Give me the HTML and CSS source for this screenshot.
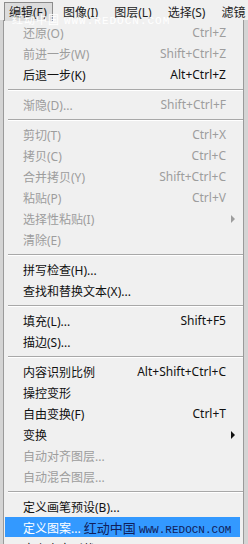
FILE: index.html
```html
<!DOCTYPE html>
<html lang="zh-CN">
  <head>
    <meta charset="UTF-8" />
    <title>编辑菜单</title>
    <link rel="stylesheet" href="styles.css">
  </head>
  <body>
    <div class="menubar">
      <span class="top active">编辑(E)</span>
      <span class="top">图像(I)</span>
      <span class="top">图层(L)</span>
      <span class="top">选择(S)</span>
      <span class="top">滤镜</span>
    </div>

    <div class="menu">
      <div class="row off"><span>还原(O)</span><span class="key">Ctrl+Z</span><i></i></div>
      <div class="row off"><span>前进一步(W)</span><span class="key">Shift+Ctrl+Z</span><i></i></div>
      <div class="row"><span>后退一步(K)</span><span class="key">Alt+Ctrl+Z</span><i></i></div>
      <div class="sep"></div>
      <div class="row off"><span>渐隐(D)...</span><span class="key">Shift+Ctrl+F</span><i></i></div>
      <div class="sep"></div>
      <div class="row off"><span>剪切(T)</span><span class="key">Ctrl+X</span><i></i></div>
      <div class="row off"><span>拷贝(C)</span><span class="key">Ctrl+C</span><i></i></div>
      <div class="row off"><span>合并拷贝(Y)</span><span class="key">Shift+Ctrl+C</span><i></i></div>
      <div class="row off"><span>粘贴(P)</span><span class="key">Ctrl+V</span><i></i></div>
      <div class="row off"><span>选择性粘贴(I)</span><span class="key"></span><i class="arrow"></i></div>
      <div class="row off"><span>清除(E)</span><span class="key"></span><i></i></div>
      <div class="sep"></div>
      <div class="row"><span>拼写检查(H)...</span><span class="key"></span><i></i></div>
      <div class="row"><span>查找和替换文本(X)...</span><span class="key"></span><i></i></div>
      <div class="sep"></div>
      <div class="row"><span>填充(L)...</span><span class="key">Shift+F5</span><i></i></div>
      <div class="row"><span>描边(S)...</span><span class="key"></span><i></i></div>
      <div class="sep"></div>
      <div class="row"><span>内容识别比例</span><span class="key">Alt+Shift+Ctrl+C</span><i></i></div>
      <div class="row"><span>操控变形</span><span class="key"></span><i></i></div>
      <div class="row"><span>自由变换(F)</span><span class="key">Ctrl+T</span><i></i></div>
      <div class="row"><span>变换</span><span class="key"></span><i class="arrow"></i></div>
      <div class="row off"><span>自动对齐图层...</span><span class="key"></span><i></i></div>
      <div class="row off"><span>自动混合图层...</span><span class="key"></span><i></i></div>
      <div class="sep"></div>
      <div class="row"><span>定义画笔预设(B)...</span><span class="key"></span><i></i></div>
      <div class="row hot">
        <span>定义图案... <b class="mark">红动中国</b> <b class="mark url">WWW.REDOCN.COM</b></span>
        <span class="key"></span><i></i>
      </div>
      <div class="row"><span>定义自定形状...</span><span class="key"></span><i></i></div>
    </div>

    <div class="watermark">红动中国 <span class="url">WWW.REDOCN.COM</span></div>
  </body>
</html>
```

FILE: styles.css
```css
body {
  margin: 0;
  width: 248px;
  height: 544px;
  overflow: hidden;
  position: relative;
  background: #d4d4d4;
  font-family: "Noto Sans", "Noto Sans CJK SC", sans-serif;
  font-size: 12px;
  color: #111;
}

.menubar {
  display: flex;
  height: 20px;
  padding-left: 4px;
  background: #f0f0f0;
  white-space: nowrap;
}

.top {
  display: flex;
  align-items: center;
  height: 18px;
  margin-top: 2px;
  padding: 0 5px 0 4px;
  margin-right: 5px;
  border: 1px solid transparent;
  border-bottom: none;
  color: #222;
}

.top.active {
  background: #dcdcdc;
  border-color: #8c8c8c;
}

.menu {
  margin-left: 3px;
  width: 239px;
  padding: 2px 0 0;
  background: #f0f0f0;
  border: 1px solid #9a9a9a;
  border-top: none;
  height: 530px;
}

.row {
  display: flex;
  align-items: center;
  height: 21px;
  padding-left: 19px;
  margin: 0 2px 0 0;
  white-space: nowrap;
}

.row span:first-child {
  flex: 1;
}

.key {
  text-align: right;
}

.row i {
  display: block;
  width: 15px;
  height: 21px;
  position: relative;
}

.arrow::after {
  content: "";
  position: absolute;
  left: 5px;
  top: 7px;
  border-left: 4px solid #111;
  border-top: 4px solid transparent;
  border-bottom: 4px solid transparent;
}

.off {
  color: #9d9d9d;
}

.off .arrow::after {
  border-left-color: #9d9d9d;
}

.sep {
  height: 9px;
  display: flex;
  align-items: center;
  padding-left: 4px;
}

.sep::after {
  content: "";
  flex: 1;
  height: 1px;
  background: #a8a8a8;
  box-shadow: 0 1px 0 #fff;
}

.hot {
  background: #3399ff;
  color: #fff;
  margin-left: 1px;
  padding-left: 18px;
  margin-right: 3px;
  height: 20px;
  margin-bottom: 1px;
}

.mark {
  font-weight: normal;
  color: #10205a;
  font-size: 13px;
}

.url {
  font-family: "Liberation Mono", monospace;
  font-size: 11px;
}

.watermark {
  position: absolute;
  left: 12px;
  top: 11px;
  color: #fff;
  font-size: 11px;
  letter-spacing: 1px;
  white-space: nowrap;
}
```
